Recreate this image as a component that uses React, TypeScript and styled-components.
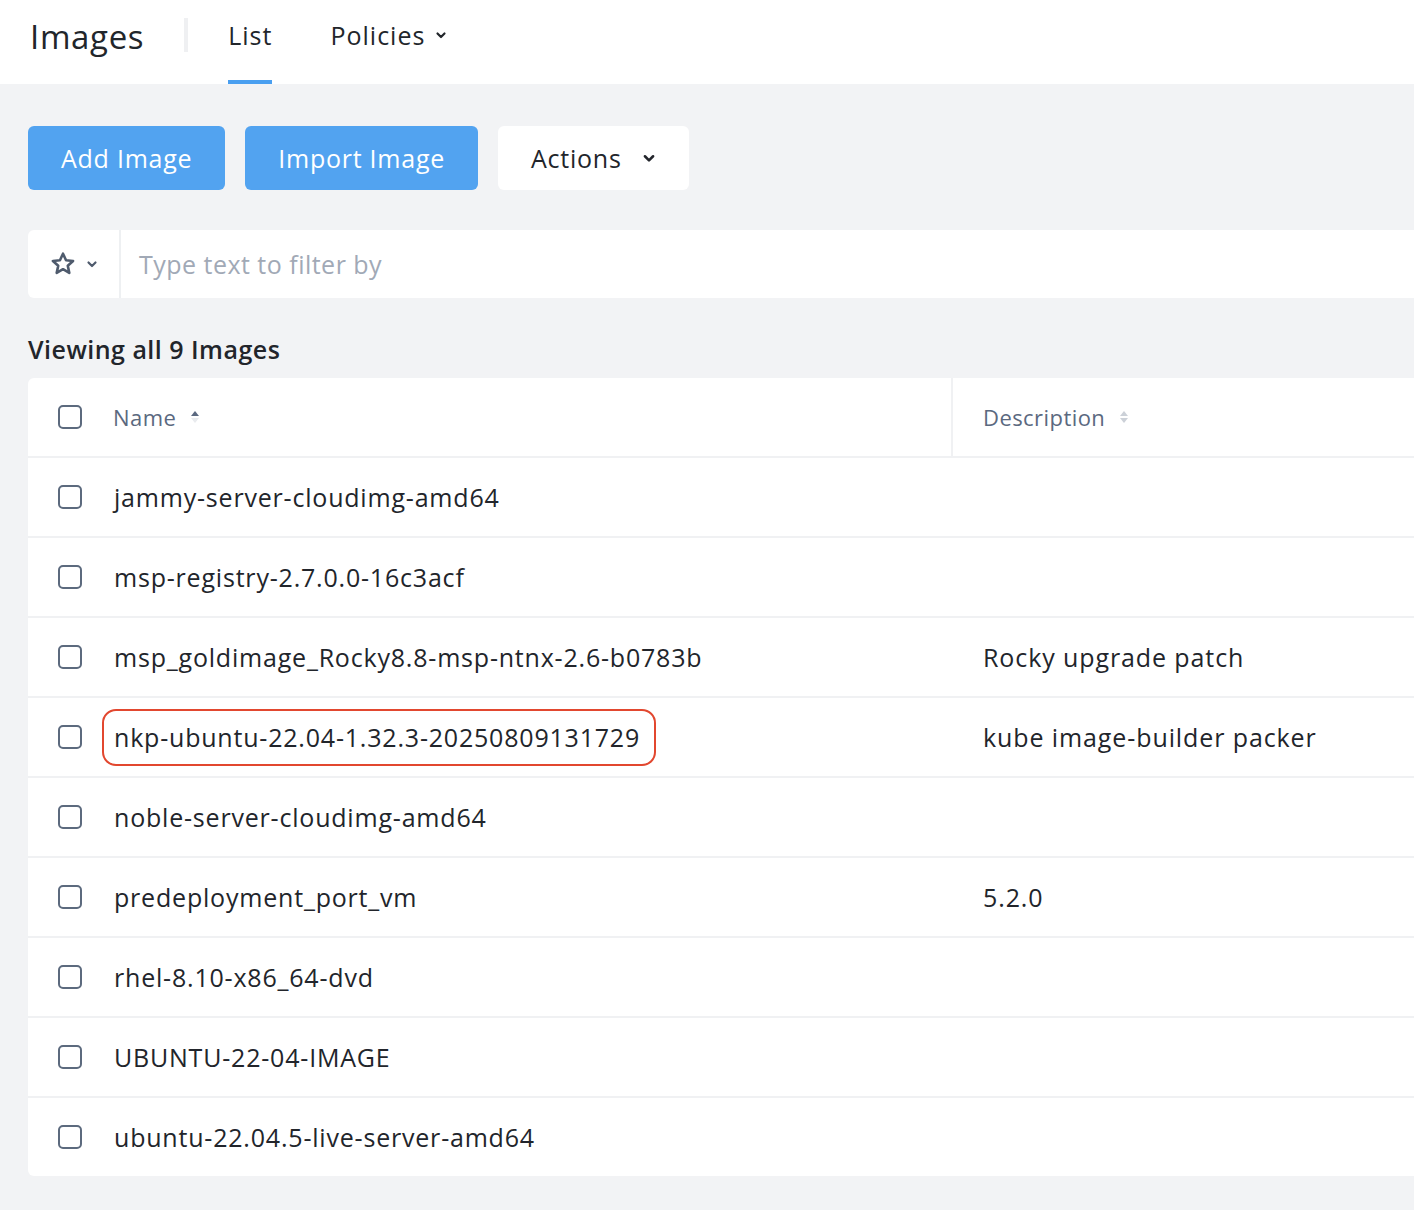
import styled, { createGlobalStyle } from "styled-components";

const GlobalStyle = createGlobalStyle`
	html, body {
		margin: 0;
		padding: 0;
		background: #f2f3f5;
		overflow: hidden;
	}
	body {
		font-family: "Open Sans", "Liberation Sans", sans-serif;
		color: #22252b;
		letter-spacing: 0.03em;
	}
`;

const Page = styled.div`
	width: 1414px;
	min-height: 1210px;
	background: #f2f3f5;
`;

const Header = styled.header`
	height: 84px;
	background: #ffffff;
	display: flex;
	align-items: stretch;
	padding-left: 30px;
`;

const Title = styled.h1`
	margin: 0;
	font-size: 33px;
	font-weight: 400;
	letter-spacing: 0.02em;
	color: #22262b;
	display: flex;
	align-items: center;
	padding-bottom: 12px;
`;

const HeaderDivider = styled.div`
	width: 4px;
	height: 34px;
	background: #eff0f2;
	align-self: flex-start;
	margin: 18px 40px 0 40px;
`;

const Tab = styled.div<{ $active?: boolean }>`
	display: flex;
	align-items: center;
	gap: 10px;
	font-size: 25px;
	letter-spacing: 0.04em;
	color: #22262b;
	padding-bottom: 10px;
	margin-right: 58px;
	border-bottom: 4px solid ${(p) => (p.$active ? "#4a9ff0" : "transparent")};
	box-sizing: border-box;
`;

const Main = styled.main`
	padding: 42px 0 40px 28px;
`;

const ButtonRow = styled.div`
	display: flex;
	gap: 20px;
`;

const Button = styled.button<{ $primary?: boolean }>`
	height: 64px;
	padding: 0 33px;
	border: none;
	border-radius: 6px;
	font-family: inherit;
	font-size: 25px;
	letter-spacing: 0.03em;
	display: flex;
	align-items: center;
	gap: 20px;
	background: ${(p) => (p.$primary ? "#52a3f0" : "#ffffff")};
	color: ${(p) => (p.$primary ? "#ffffff" : "#22252b")};
`;

const FilterBar = styled.div`
	margin-top: 40px;
	height: 68px;
	width: 1420px;
	background: #ffffff;
	border-radius: 6px;
	display: flex;
	align-items: stretch;
`;

const FavoriteToggle = styled.div`
	width: 93px;
	display: flex;
	align-items: center;
	justify-content: center;
	gap: 10px;
	border-right: 2px solid #eef0f2;
	color: #4f5b6d;
	box-sizing: border-box;
`;

const FilterInput = styled.div`
	display: flex;
	align-items: center;
	padding-left: 18px;
	font-size: 25px;
	color: #a1a9b6;
`;

const Summary = styled.h2`
	margin: 36px 0 14px;
	font-size: 25px;
	line-height: 30px;
	font-weight: 600;
	color: #22252b;
`;

const TableCard = styled.div`
	width: 1420px;
	background: #ffffff;
	border-radius: 6px;
	overflow: hidden;
`;

const Row = styled.div`
	display: grid;
	grid-template-columns: 925px 1fr;
	height: 78px;
	border-bottom: 2px solid #f0f1f3;
	&:last-child {
		border-bottom: none;
	}
`;

const NameCell = styled.div<{ $head?: boolean }>`
	display: flex;
	align-items: center;
	padding-left: 30px;
	gap: ${(p) => (p.$head ? "31px" : "32px")};
	border-right: 2px solid ${(p) => (p.$head ? "#f0f1f3" : "transparent")};
`;

const DescCell = styled.div`
	display: flex;
	align-items: center;
	padding-left: 30px;
	font-size: 25px;
	letter-spacing: 0.9px;
	color: #22252b;
`;

const HeadLabel = styled.span`
	display: flex;
	align-items: center;
	gap: 14px;
	font-size: 22px;
	letter-spacing: 0.02em;
	color: #5b6980;
`;

const Checkbox = styled.span`
	width: 24px;
	height: 24px;
	box-sizing: border-box;
	border: 2px solid #5c6a7e;
	border-radius: 5px;
	flex: none;
`;

const NameText = styled.span<{ $highlight?: boolean }>`
	font-size: 25px;
	line-height: 30px;
	letter-spacing: 0.8px;
	color: #22252b;
	${(p) =>
		p.$highlight
			? `
		border: 2px solid #e2472f;
		border-radius: 14px;
		padding: 11px 14px 12px 10px;
		margin-left: -12px;
	`
			: ""}
`;

const Chevron = ({ size = 12 }: { size?: number }) => (
	<svg width={size} height={size} viewBox="0 0 12 12">
		<polyline
			points="2.5,4.5 6,8 9.5,4.5"
			fill="none"
			stroke="currentColor"
			strokeWidth="2.2"
			strokeLinecap="round"
			strokeLinejoin="round"
		/>
	</svg>
);

const StarIcon = () => (
	<svg width="26" height="26" viewBox="0 0 24 24">
		<polygon
			points="12,2.5 14.8,8.6 21.3,9.2 16.4,13.6 17.8,20.2 12,16.8 6.2,20.2 7.6,13.6 2.7,9.2 9.2,8.6"
			fill="none"
			stroke="currentColor"
			strokeWidth="2.4"
			strokeLinejoin="round"
		/>
	</svg>
);

const SortIcon = ({ active }: { active?: boolean }) => (
	<svg width="10" height="20" viewBox="0 0 10 20">
		<polygon points="5,4 9,9 1,9" fill={active ? "#5b6980" : "#ccd1d8"} />
		<polygon points="1,11 9,11 5,16" fill={active ? "#e9ebee" : "#ccd1d8"} />
	</svg>
);

interface IImage {
	name: string;
	description?: string;
	highlight?: boolean;
}

const images: IImage[] = [
	{ name: "jammy-server-cloudimg-amd64" },
	{ name: "msp-registry-2.7.0.0-16c3acf" },
	{ name: "msp_goldimage_Rocky8.8-msp-ntnx-2.6-b0783b", description: "Rocky upgrade patch" },
	{ name: "nkp-ubuntu-22.04-1.32.3-20250809131729", description: "kube image-builder packer", highlight: true },
	{ name: "noble-server-cloudimg-amd64" },
	{ name: "predeployment_port_vm", description: "5.2.0" },
	{ name: "rhel-8.10-x86_64-dvd" },
	{ name: "UBUNTU-22-04-IMAGE" },
	{ name: "ubuntu-22.04.5-live-server-amd64" },
];

const App = () => {
	return (
		<Page>
			<GlobalStyle />
			<Header>
				<Title>Images</Title>
				<HeaderDivider />
				<Tab $active>List</Tab>
				<Tab>
					Policies <Chevron />
				</Tab>
			</Header>
			<Main>
				<ButtonRow>
					<Button $primary>Add Image</Button>
					<Button $primary>Import Image</Button>
					<Button>
						Actions <Chevron size={14} />
					</Button>
				</ButtonRow>
				<FilterBar>
					<FavoriteToggle>
						<StarIcon />
						<Chevron />
					</FavoriteToggle>
					<FilterInput>Type text to filter by</FilterInput>
				</FilterBar>
				<Summary>Viewing all {images.length} Images</Summary>
				<TableCard>
					<Row>
						<NameCell $head>
							<Checkbox />
							<HeadLabel>
								Name <SortIcon active />
							</HeadLabel>
						</NameCell>
						<DescCell>
							<HeadLabel>
								Description <SortIcon />
							</HeadLabel>
						</DescCell>
					</Row>
					{images.map((img) => (
						<Row key={img.name}>
							<NameCell>
								<Checkbox />
								<NameText $highlight={img.highlight}>{img.name}</NameText>
							</NameCell>
							<DescCell>{img.description}</DescCell>
						</Row>
					))}
				</TableCard>
			</Main>
		</Page>
	);
};

export default App;
